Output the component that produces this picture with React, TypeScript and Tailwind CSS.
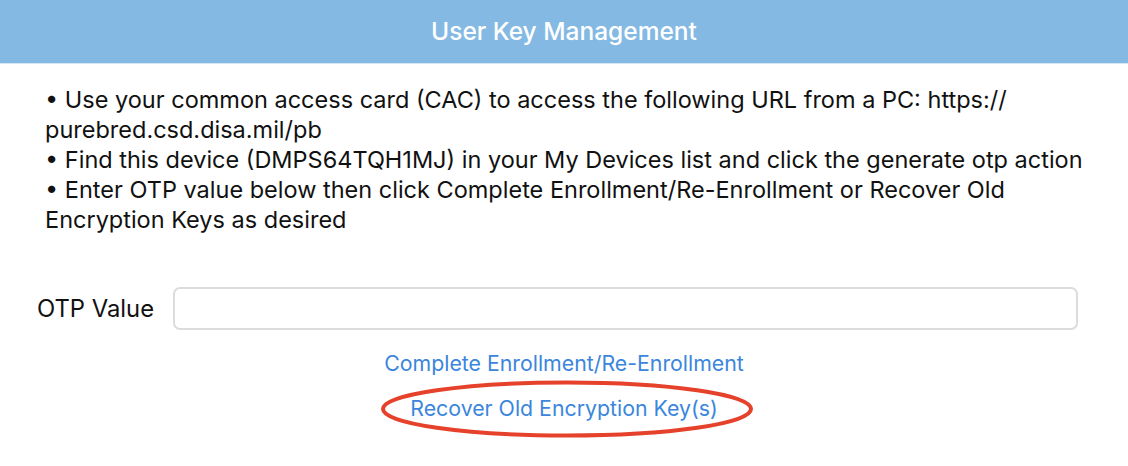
import React from "react";

export default function App() {
  const font = { fontFamily: "Inter, 'Liberation Sans', sans-serif" };
  return (
    <div className="w-[1128px] h-[466px] bg-white overflow-hidden" style={font}>
      <div className="h-[64px] bg-[#84b9e3] flex items-center justify-center border-b border-[#d7e6f2]">
        <span className="text-white text-[24.5px] font-medium">User Key Management</span>
      </div>
      <div className="pl-[45px] pt-[21px] text-[23.5px] leading-[30px] text-[#111]">
        <div>• Use your common access card (CAC) to access the following URL from a PC: https://</div>
        <div>purebred.csd.disa.mil/pb</div>
        <div>• Find this device (DMPS64TQH1MJ) in your My Devices list and click the generate otp action</div>
        <div>• Enter OTP value below then click Complete Enrollment/Re-Enrollment or Recover Old</div>
        <div>Encryption Keys as desired</div>
      </div>
      <div className="flex items-center mt-[52px] pl-[37px]">
        <span className="text-[23.8px] text-[#111] w-[136px]">OTP Value</span>
        <div className="w-[905px] h-[43px] border-2 border-[#dcdcdc] rounded-[7px] bg-white" />
      </div>
      <div className="flex flex-col items-center mt-[19px] text-[21.3px] text-[#3b86dc]">
        <span className="leading-[28px]">Complete Enrollment/Re-Enrollment</span>
        <div className="relative mt-[16px]">
          <span className="leading-[28px]">Recover Old Encryption Key(s)</span>
          <svg className="absolute left-[calc(50%+3px)] -translate-x-1/2 top-[-14px]" width="376" height="60" viewBox="0 0 376 60">
            <ellipse cx="188" cy="30" rx="184" ry="26.5" fill="none" stroke="#e6412a" strokeWidth="4" />
          </svg>
        </div>
      </div>
    </div>
  );
}
